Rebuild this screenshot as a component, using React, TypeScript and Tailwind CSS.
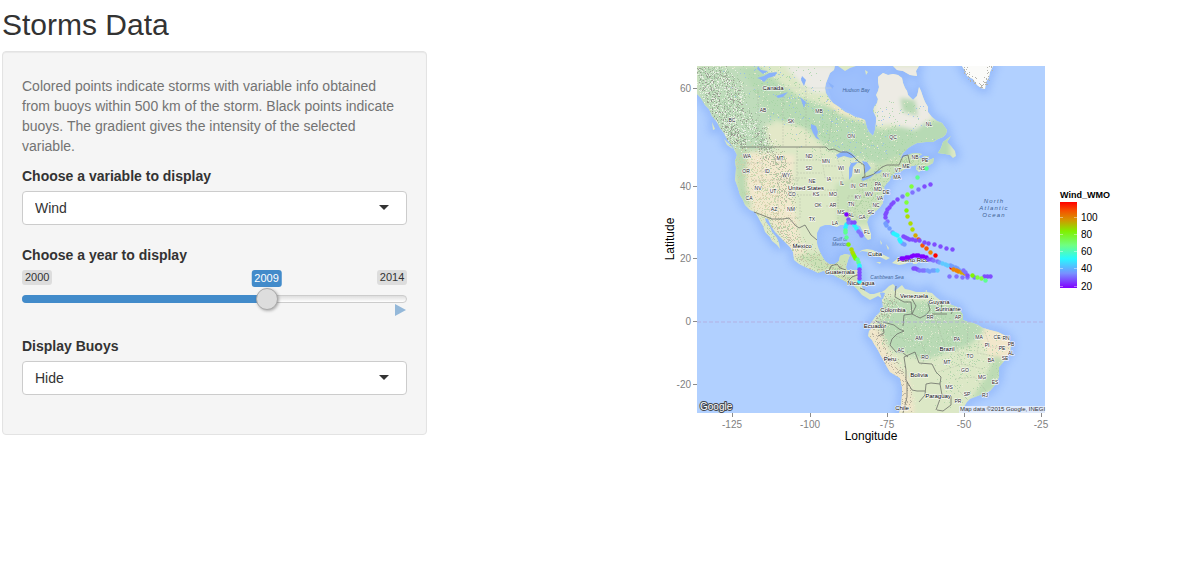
import { useState } from "react";
import type { ReactNode } from "react";

type Point = [number, number];
type Label = [number, number, string];

const NORTH_AMERICA =
  "M697 66V94L701 98 705 105 709 109 712 116 717 122 720 128 724 133 727 139 733 147 737 155 735 161 736 168 735 180 738 188 740 195 743 200 745 205 750 210 755 212 758 217 760 221 763 226 765 232 770 237 772 241 777 245 780 249 779 243 777 238 772 232 770 227 766 222 765 218 768 219 771 226 775 232 780 237 785 242 790 247 793 252 794 260 799 264 805 267 812 270 818 273 823 271 829 272 837 277 843 280 848 283 853 285 857 289 862 295 867 298 870 300 874 298 878 296 883 299 885 293 880 292 874 294 870 294 865 291 862 287 861 280 861 275 860 270 853 270 847 270 846 267 848 260 850 255 845 254 840 256 839 261 835 264 829 264 825 261 822 256 820 252 818 247 817 243 817 233 820 227 825 225 830 225 837 227 840 225 843 225 848 223 855 224 860 226 863 232 865 237 868 240 871 239 871 234 869 228 867 222 869 217 872 214 877 210 880 207 883 203 883 198 885 192 884 187 887 183 890 180 891 176 895 173 900 172 903 170 908 167 912 166 917 165 916 169 919 172 926 167 933 163 934 158 929 160 923 160 918 157 922 154 916 153 910 154 904 157 900 159 903 153 908 148 913 145 917 143 926 142 933 142 938 139 943 137 946 134 947 130 942 123 937 121 932 117 928 112 928 107 925 102 923 97 921 91 919 87 918 92 917 96 913 100 911 98 908 95 907 91 905 88 903 83 902 78 898 75 893 74 888 75 883 73 878 77 878 82 879 87 878 91 876 95 878 99 877 103 874 107 873 111 876 117 876 122 875 130 873 136 869 132 867 128 866 124 865 120 860 118 855 117 850 114 845 112 839 107 833 103 829 98 826 93 825 88 826 83 828 78 830 73 834 70 835 66Z";
const SOUTH_AMERICA =
  "M880 293L885 290 889 286 893 284 895 286 894 291 897 289 902 285 905 289 910 290 916 292 922 292 927 292 932 293 936 297 940 300 946 303 952 305 957 307 960 310 963 315 963 320 968 322 973 323 978 325 983 328 990 330 998 332 1004 335 1007 337 1011 343 1010 352 1005 360 999 367 999 377 997 381 995 385 990 391 985 393 980 395 975 397 970 399 967 402 964 407 962 413H899L901 407 902 395 902 387 900 378 895 375 890 372 887 367 885 363 881 356 878 350 874 344 872 340 868 336 869 331 872 328 870 324 873 320 875 317 880 312 883 307 882 300Z";
const ISLANDS =
  "M893 66L897 70 903 71 910 75 917 76 916 71 919 66ZM951 136L947 142 951 146 955 151 956 156 953 158 950 155 945 154 938 153 941 148 943 142ZM858 253L862 250 867 249 873 250 878 253 884 255 890 258 886 260 880 257 874 256 868 252 862 251ZM892 263L897 259 903 259 909 262 905 264 899 265ZM876 262L881 262 880 264ZM913 262L918 262 917 264 913 264ZM880 240L882 243 881 245ZM886 244L889 248 888 250ZM712 122L715 129 713 130ZM724 139L731 146 733 149 727 145ZM838 66L845 71 850 68 856 66ZM865 70L868 72 866 75ZM925 291L927 290 927 292ZM923 156L929 156 927 158Z";
const GREENLAND = "M962 66L965 71 967 76 973 79 977 85 981 88 985 89 986 82 989 77 990 72 993 66Z";

const LAND = `${NORTH_AMERICA}${SOUTH_AMERICA}${ISLANDS}${GREENLAND}`;

const LAKES =
  "M757 78L764 76 769 73 777 72 775 76 768 78 764 82 760 79ZM776 96L782 94 788 92 783 97 778 98ZM811 124L816 126 818 132 817 136 820 140 816 138 813 133 811 128ZM828 82L834 86 832 89ZM836 155L843 151 850 152 856 157 851 158 844 156 838 158ZM849 168L851 163 858 162 853 167 852 176 849 180ZM862 161L867 162 871 168 868 171 864 174 865 167ZM861 179L869 176 875 174 870 178 863 181ZM874 172L882 170 880 173 875 174ZM758 66L761 70 768 71 763 74 757 69ZM802 76L806 80 804 86 801 80ZM800 97L806 102 804 108Z";

const BORDERS =
  "M740 147H826L829 150 834 149 840 152 847 152 852 155 858 161 864 165 865 176 862 178 869 176 874 174 882 167 887 165 899 165 903 156 908 155 910 164M754 212L762 215 772 219 783 219 789 218 795 225 799 228 805 225 811 235 817 240M829 271L831 266 837 264 840 268 846 270M848 281L852 277 860 274M843 277L848 272M860 288L865 290M896 286L895 297 904 302 911 302 912 314 904 315 903 326M912 299L916 306 912 314 920 318 926 315 930 310 928 302 932 298M932 314L947 314M942 301L941 313M955 307L951 314M876 321L883 325 884 333 878 336M883 322L894 325 899 329 904 331 897 334 892 339 890 345 896 352 902 352 908 357M904 357L915 352 919 363 932 364 936 372 941 377 940 384 931 383 926 384 925 395 919 402M904 357L906 370 906 380 912 390 917 391 925 391M907 382L907 397 903 413M940 384L942 395 951 396 951 405 943 411 937 410M940 399L936 410";

const STATE_LINES =
  "M758 90V147M783 90V147M806 90V147M833 110L828 147M744 163H762M762 147V180M771 150L778 170M778 163H797M797 147V185M797 160H820M797 173H822M780 178H807M759 180L771 196M778 180V216M752 180H800M797 195H838M800 198V218H786M820 147L825 178M825 166H842M826 178H843M838 160L844 180M824 190H838M826 206H838M838 196V222M848 197V222M855 196V217M848 196H873M852 180V188L868 192M862 180V188M866 180H876M876 165V176M882 167V173M850 217H867M890 335L912 340M915 325L925 352M935 318L946 350M952 330L962 365M968 325L967 352M980 335L977 353 994 356M938 372L962 364 983 369M955 379L975 377 986 391M958 390L968 400M921 365L931 350M985 332L990 347 1010 347";

const MAP_LABELS: Label[] = [
  [732, 122, "BC"], [763, 112, "AB"], [791, 123, "SK"], [819, 113, "MB"], [851, 138, "ON"],
  [893, 139, "QC"], [929, 126, "NL"], [747, 158, "WA"], [780, 160, "MT"], [809, 158, "ND"],
  [826, 163, "MN"], [809, 170, "SD"], [746, 173, "OR"], [767, 173, "ID"], [786, 177, "WY"],
  [841, 170, "WI"], [857, 173, "MI"], [829, 181, "IA"], [812, 183, "NE"], [758, 190, "NV"],
  [773, 193, "UT"], [792, 196, "CO"], [816, 196, "KS"], [833, 196, "MO"], [842, 185, "IL"],
  [853, 188, "IN"], [863, 187, "OH"], [878, 186, "PA"], [886, 177, "NY"], [897, 179, "MA"],
  [898, 172, "VT"], [906, 168, "ME"], [915, 159, "NB"], [925, 162, "PE"], [922, 170, "NS"],
  [869, 196, "WV"], [878, 191, "MD"], [886, 194, "DE"], [880, 200, "VA"], [876, 207, "NC"],
  [871, 214, "SC"], [858, 199, "KY"], [851, 206, "TN"], [749, 200, "CA"], [774, 211, "AZ"],
  [791, 211, "NM"], [818, 207, "OK"], [833, 207, "AR"], [812, 221, "TX"], [835, 225, "LA"],
  [841, 214, "MS"], [851, 217, "AL"], [862, 219, "GA"], [867, 234, "FL"], [930, 319, "RR"],
  [958, 319, "AP"], [919, 340, "AM"], [957, 341, "PA"], [979, 339, "MA"], [997, 339, "CE"],
  [1006, 340, "RN"], [1011, 346, "PB"], [1002, 350, "PE"], [1011, 355, "AL"], [1005, 360, "SE"],
  [987, 347, "PI"], [901, 352, "AC"], [925, 359, "RO"], [947, 364, "MT"], [970, 358, "TO"],
  [991, 362, "BA"], [965, 372, "GO"], [982, 379, "MG"], [995, 384, "ES"], [949, 389, "MS"],
  [967, 396, "SP"], [985, 397, "RJ"], [958, 403, "PR"],
];

const COUNTRY_LABELS: Label[] = [
  [773, 90, "Canada"], [806, 190, "United States"], [802, 248, "Mexico"], [840, 274, "Guatemala"],
  [861, 285, "Nicaragua"], [875, 256, "Cuba"], [913, 262, "Puerto Rico"], [914, 298, "Venezuela"],
  [893, 312, "Colombia"], [939, 304, "Guyana"], [948, 311, "Suriname"], [875, 328, "Ecuador"],
  [890, 361, "Peru"], [947, 351, "Brazil"], [919, 377, "Bolivia"], [938, 398, "Paraguay"],
  [902, 410, "Chile"],
];

const SEA_LABELS: Label[] = [
  [856, 92, "Hudson Bay"], [840, 241, "Gulf of"], [840, 246, "Mexico"], [887, 279, "Caribbean Sea"],
];

const COLOR = {
  violet: "#7f00ff",
  purple: "#7f4dff",
  slate: "#8073ff",
  blue: "#739dff",
  sky: "#5fcaff",
  cyan: "#28f4ff",
  spring: "#5cff91",
  lime: "#80ff3c",
  green: "#80f500",
  olive: "#aedb00",
  gold: "#d5a900",
  orange: "#ef8500",
  vermilion: "#fa5600",
  red: "#ff0000",
};

const STORM_POINTS: { color: string; points: Point[] }[] = [
  { color: COLOR.purple, points: [[930, 184], [924, 186], [897, 199], [893, 202], [891, 204], [889, 207], [887, 209], [886, 212], [885, 214], [885, 217]] },
  { color: COLOR.slate, points: [[918, 189], [912, 192], [902, 196], [887, 221]] },
  { color: COLOR.blue, points: [[885, 223], [886, 225], [889, 228], [892, 232], [902, 243], [904, 244]] },
  { color: COLOR.cyan, points: [[893, 233], [895, 234], [897, 235], [899, 239], [900, 241]] },
  { color: COLOR.spring, points: [[926, 168], [917, 177]] },
  { color: COLOR.lime, points: [[911, 186], [907, 194], [906, 202]] },
  { color: COLOR.green, points: [[906, 210]] },
  { color: COLOR.olive, points: [[907, 216], [910, 223], [912, 229]] },
  { color: COLOR.gold, points: [[915, 235]] },
  { color: COLOR.vermilion, points: [[918, 239], [922, 245], [926, 248]] },
  { color: COLOR.orange, points: [[930, 252]] },
  { color: COLOR.red, points: [[935, 255], [951, 267]] },
  { color: COLOR.purple, points: [[903, 236], [905, 237], [907, 238], [909, 239], [912, 239], [915, 240], [919, 240], [924, 242], [928, 243], [934, 244], [940, 246], [946, 248], [952, 249]] },
  { color: COLOR.violet, points: [[901, 258], [903, 258], [906, 257], [908, 257], [911, 256], [913, 255], [916, 255], [918, 255], [921, 256], [923, 256], [926, 257]] },
  { color: COLOR.purple, points: [[928, 259], [931, 259]] },
  { color: COLOR.slate, points: [[933, 260], [937, 261]] },
  { color: COLOR.blue, points: [[939, 262], [950, 265], [952, 266], [955, 267], [957, 268], [959, 270]] },
  { color: COLOR.sky, points: [[942, 263], [945, 264], [947, 265]] },
  { color: COLOR.orange, points: [[953, 269], [956, 270], [958, 271]] },
  { color: COLOR.gold, points: [[961, 272], [964, 273]] },
  { color: COLOR.slate, points: [[963, 270], [965, 272], [949, 276], [956, 276], [962, 277], [967, 277], [974, 277]] },
  { color: COLOR.purple, points: [[967, 275], [984, 276], [987, 276], [990, 276]] },
  { color: COLOR.green, points: [[972, 275]] },
  { color: COLOR.lime, points: [[977, 277], [981, 278]] },
  { color: COLOR.spring, points: [[985, 280]] },
  { color: COLOR.purple, points: [[913, 268], [915, 268], [917, 269]] },
  { color: COLOR.slate, points: [[919, 270], [922, 270], [924, 270]] },
  { color: COLOR.blue, points: [[927, 270], [929, 271], [932, 270], [934, 270]] },
  { color: COLOR.sky, points: [[937, 270]] },
  { color: COLOR.violet, points: [[846, 214]] },
  { color: COLOR.cyan, points: [[846, 224], [845, 227], [854, 225], [856, 228]] },
  { color: COLOR.purple, points: [[848, 219], [851, 222], [854, 222]] },
  { color: COLOR.slate, points: [[848, 222], [858, 231], [860, 233], [861, 235]] },
  { color: COLOR.spring, points: [[845, 230], [845, 232], [846, 237]] },
  { color: COLOR.green, points: [[848, 244], [853, 254], [854, 256], [855, 258]] },
  { color: COLOR.olive, points: [[851, 249], [852, 252]] },
  { color: COLOR.spring, points: [[857, 259], [858, 262]] },
  { color: COLOR.cyan, points: [[859, 265], [859, 267], [859, 281]] },
  { color: COLOR.purple, points: [[859, 269], [859, 272], [859, 275], [859, 278]] },
];

function seeded(seed: number) {
  let state = seed;
  return () => {
    state = (state * 16807) % 2147483647;
    return state / 2147483647;
  };
}

// Scatters small unit squares around a polyline and returns them as one path.
function scatter(line: Point[], spread: number, count: number, seed: number) {
  const random = seeded(seed);
  let d = "";
  for (let i = 0; i < count; i++) {
    const t = random() * (line.length - 1);
    const k = Math.floor(t);
    const [x0, y0] = line[k];
    const [x1, y1] = line[k + 1];
    const x = Math.round(x0 + (x1 - x0) * (t - k) + (random() - 0.5) * 2 * spread);
    const y = Math.round(y0 + (y1 - y0) * (t - k) + (random() - 0.5) * 2 * spread);
    d += `M${x} ${y}h1v1h-1z`;
  }
  return d;
}

const ROCKIES: Point[] = [[702, 68], [712, 95], [727, 125], [740, 143]];
const EAST_ROCKIES: Point[] = [[712, 66], [733, 85], [735, 108], [757, 130], [768, 155]];
const WEST: Point[] = [[745, 150], [755, 180], [768, 205], [785, 225]];
const SIERRA: Point[] = [[773, 222], [789, 240], [805, 257], [830, 270], [848, 276]];
const COLORADO: Point[] = [[772, 150], [782, 175], [788, 200]];
const ANDES: Point[] = [[892, 296], [882, 315], [876, 332], [887, 358], [903, 375], [909, 412]];
const NORTH: Point[] = [[740, 72], [790, 95], [825, 125], [865, 140], [915, 125]];
const APPALACHIANS: Point[] = [[855, 213], [870, 195], [888, 175], [905, 160], [920, 153]];
const AMAZON: Point[] = [[900, 320], [935, 330], [980, 350], [960, 385]];

const TEXTURES = [
  { fill: "#a3d3a2", d: scatter(NORTH, 30, 700, 11) },
  { fill: "#f1eed6", d: scatter(NORTH, 28, 300, 23) },
  { fill: "#8db8f2", d: scatter(NORTH, 26, 170, 37) },
  { fill: "#9cbc9b", d: scatter(ROCKIES, 10, 380, 41) },
  { fill: "#8f8b85", d: scatter(ROCKIES, 8, 260, 47) },
  { fill: "#f7f6f0", d: scatter(ROCKIES, 10, 340, 43) },
  { fill: "#9cbc9b", d: scatter(EAST_ROCKIES, 10, 380, 53) },
  { fill: "#97928c", d: scatter(EAST_ROCKIES, 7, 180, 61) },
  { fill: "#f7f6f0", d: scatter(EAST_ROCKIES, 10, 280, 59) },
  { fill: "#b9d4a5", d: scatter(WEST, 17, 480, 67) },
  { fill: "#d9cda9", d: scatter(WEST, 17, 400, 71) },
  { fill: "#c2ba9f", d: scatter(SIERRA, 9, 300, 73) },
  { fill: "#a5cc9c", d: scatter(SIERRA, 11, 320, 79) },
  { fill: "#a4c59a", d: scatter(COLORADO, 10, 280, 83) },
  { fill: "#b4ad98", d: scatter(COLORADO, 8, 140, 89) },
  { fill: "#aba493", d: scatter(ANDES, 6, 300, 97) },
  { fill: "#f3ead0", d: scatter(ANDES, 8, 240, 101) },
  { fill: "#acd0a0", d: scatter(APPALACHIANS, 10, 380, 103) },
  { fill: "#a9d2a5", d: scatter(AMAZON, 30, 620, 107) },
  { fill: "#e9ecd6", d: scatter(AMAZON, 25, 260, 109) },
];

const GREENLAND_EDGE =
  scatter([[964, 68], [968, 75], [981, 86], [987, 80], [991, 66]], 3, 60, 127);

const Y_TICKS = [
  { y: 88, label: "60" },
  { y: 186, label: "40" },
  { y: 258, label: "20" },
  { y: 321, label: "0" },
  { y: 384, label: "-20" },
];
const X_TICKS = [
  { x: 732, label: "-125" },
  { x: 810, label: "-100" },
  { x: 887, label: "-75" },
  { x: 964, label: "-50" },
  { x: 1041, label: "-25" },
];
const LEGEND_TICKS = [
  { y: 217, label: "100" },
  { y: 234, label: "80" },
  { y: 251, label: "60" },
  { y: 268, label: "40" },
  { y: 286, label: "20" },
];

function BaseMap() {
  return (
    <g clipPath="url(#panel)">
      <rect x="697" y="66" width="348" height="347" fill="#b1d0ff" />
      <path d={LAND} fill="none" stroke="#6f9cf5" strokeWidth="8" opacity="0.45" filter="url(#shelf)" />
      <path d="M835 66L826 83 833 103 865 120 873 136 877 95 883 73 893 66Z" fill="#98bbfb" opacity="0.8" />
      <path d="M817 230H863L869 242 850 254 838 262 822 258Z" fill="#8fb5fb" opacity="0.4" filter="url(#shelf)" />
      <path d={LAND} fill="#dce8c6" />
      <g clipPath="url(#land)">
        <g filter="url(#biome)">
          <path d="M697 66H750L770 80 775 150 735 152 697 100Z" fill="#bfdcbb" />
          <path d="M758 66L800 98 832 108 866 122 880 130 950 118V165H880L830 150 805 128 770 118 740 66Z" fill="#b7dab4" />
          <path d="M765 124L800 126 822 148H770Z" fill="#e3e8c8" />
          <path d="M785 66H836L826 93 812 92 800 82Z" fill="#ecebe6" />
          <path d="M818 96L834 103 868 119 864 122 840 114Z" fill="#f3e9c9" />
          <path d="M876 66H925L932 118 915 130 890 124 875 125Z" fill="#edebe4" />
          <path d="M900 98L915 100 918 116 903 112Z" fill="#b8d9b4" />
          <path d="M745 152L795 155 792 195 800 240 810 262 795 258 770 220 750 208 742 180Z" fill="#f1e8cd" />
          <path d="M733 150H748L746 185 752 208 738 200Z" fill="#bcdab2" />
          <path d="M835 185L900 155 935 150 930 180 885 190 878 225 838 225Z" fill="#c8e0b8" />
          <path d="M794 255L850 252 862 295 880 300 840 285Z" fill="#cce0b5" />
          <path d="M885 298L960 305 985 330 970 345 925 360 892 350 876 330Z" fill="#b9dab5" />
          <path d="M985 326L1015 335 1012 358 992 360 982 345Z" fill="#f2e7cb" />
          <path d="M866 325L880 330 893 362 908 378 915 413H895L880 370Z" fill="#f0e5c9" />
          <path d="M995 355L1005 360 996 388 970 402 985 378Z" fill="#bddbb4" />
        </g>
        {TEXTURES.map((texture, i) => (
          <path key={i} d={texture.d} fill={texture.fill} opacity="0.75" />
        ))}
        <path d={STATE_LINES} fill="none" stroke="#9aa392" strokeWidth="0.5" opacity="0.6" strokeDasharray="2 1" />
      </g>
      <path d={GREENLAND} fill="#fbfbf9" />
      <path d={GREENLAND_EDGE} fill="#b5b4ad" />
      <path d={LAKES} fill="#8ab2fa" />
      <path d={BORDERS} fill="none" stroke="#6c6f68" strokeWidth="0.8" strokeLinejoin="round" />
      <path d="M697 322H1045" stroke="#b3a9dc" strokeWidth="0.8" strokeDasharray="4 2" />
      <path d="M697 88H832" stroke="#ccd6c8" strokeWidth="0.5" />
    </g>
  );
}

function MapText() {
  return (
    <g textAnchor="middle" fontFamily="'Liberation Sans', Arial, sans-serif" stroke="#ffffff" strokeWidth="1.2" paintOrder="stroke" strokeLinejoin="round">
      <g fontSize="5" fill="#222222">
        {MAP_LABELS.map(([x, y, text]) => (
          <text key={`${text}${x}`} x={x} y={y}>{text}</text>
        ))}
      </g>
      <g fontSize="6" fill="#000000">
        {COUNTRY_LABELS.map(([x, y, text]) => (
          <text key={text} x={x} y={y}>{text}</text>
        ))}
      </g>
      <g fontSize="5" fill="#45689b" fontStyle="italic" stroke="none">
        {SEA_LABELS.map(([x, y, text]) => (
          <text key={text} x={x} y={y}>{text}</text>
        ))}
      </g>
      <g fontSize="6" fill="#3d5f92" fontStyle="italic" stroke="none" className="tracking-[0.2em]">
        <text x="994" y="203">North</text>
        <text x="994" y="210">Atlantic</text>
        <text x="994" y="217">Ocean</text>
      </g>
    </g>
  );
}

function StormMap() {
  return (
    <svg viewBox="587 51 600 400" className="block w-full max-w-[600px]" role="img" aria-label="Storm tracks by wind speed">
      <defs>
        <clipPath id="panel"><rect x="697" y="66" width="348" height="347" /></clipPath>
        <clipPath id="land"><path d={LAND} /></clipPath>
        <filter id="shelf" x="-10%" y="-10%" width="120%" height="120%"><feGaussianBlur stdDeviation="4" /></filter>
        <filter id="biome" x="-10%" y="-10%" width="120%" height="120%"><feGaussianBlur stdDeviation="2" /></filter>
        <linearGradient id="wind" x1="0" y1="0" x2="0" y2="1">
          <stop offset="0" stopColor="#ff0000" />
          <stop offset="0.1" stopColor="#f55000" />
          <stop offset="0.2" stopColor="#d99000" />
          <stop offset="0.34" stopColor="#80f000" />
          <stop offset="0.5" stopColor="#70ff80" />
          <stop offset="0.66" stopColor="#28f8ff" />
          <stop offset="0.83" stopColor="#7890ff" />
          <stop offset="1" stopColor="#8000ff" />
        </linearGradient>
      </defs>

      <BaseMap />
      <MapText />

      {STORM_POINTS.map((group, i) => (
        <g key={i} fill={group.color}>
          {group.points.map(([x, y]) => (
            <circle key={`${x},${y}`} cx={x + 0.5} cy={y + 0.5} r="2.2" />
          ))}
        </g>
      ))}

      <g fontFamily="'Liberation Sans', Arial, sans-serif">
        <text x="700" y="410" fontSize="10" fill="#ffffff" stroke="#43474e" strokeWidth="2" paintOrder="stroke" strokeLinejoin="round">Google</text>
        <rect x="959" y="406" width="86" height="7" fill="#e8effb" opacity="0.85" />
        <text x="960" y="411" fontSize="6" fill="#333333">Map data ©2015 Google, INEGI</text>

        <g stroke="#8c8c8c" strokeWidth="1">
          {Y_TICKS.map(({ y }) => <path key={y} d={`M693 ${y + 0.5}H697`} />)}
          {X_TICKS.map(({ x }) => <path key={x} d={`M${x + 0.5} 413V417`} />)}
        </g>
        <g fontSize="10" fill="#7f7f7f">
          {Y_TICKS.map(({ y, label }) => (
            <text key={y} x="691" y={y + 4} textAnchor="end">{label}</text>
          ))}
          {X_TICKS.map(({ x, label }) => (
            <text key={x} x={x} y="428" textAnchor="middle">{label}</text>
          ))}
        </g>
        <text x="871" y="440" fontSize="12" textAnchor="middle">Longitude</text>
        <text transform="translate(674 239) rotate(-90)" fontSize="12" textAnchor="middle">Latitude</text>

        <text x="1060" y="198" fontSize="9" fontWeight="700">Wind_WMO</text>
        <rect x="1060" y="202" width="17" height="86" fill="url(#wind)" />
        {LEGEND_TICKS.map(({ y, label }) => (
          <g key={y}>
            <path d={`M1060 ${y + 0.5}h3M1074 ${y + 0.5}h3`} stroke="#ffffff" strokeWidth="0.6" opacity="0.7" />
            <text x="1081" y={y + 4} fontSize="10">{label}</text>
          </g>
        ))}
      </g>
    </svg>
  );
}

function SelectField({ id, label, options }: { id: string; label: string; options: string[] }) {
  return (
    <div>
      <label htmlFor={id} className="mb-[5px] block font-bold">{label}</label>
      <div className="relative">
        <select
          id={id}
          className="block h-[34px] w-full appearance-none rounded-[4px] border border-[#cccccc] bg-white pr-10 pl-3 text-sm text-[#333333]"
        >
          {options.map((option) => <option key={option}>{option}</option>)}
        </select>
        <svg viewBox="0 0 10 5" className="pointer-events-none absolute top-3.5 right-[18px] h-[5px] w-2.5" aria-hidden="true">
          <path d="M0 0H10L5 5Z" fill="#333333" />
        </svg>
      </div>
    </div>
  );
}

function Tag({ children }: { children: ReactNode }) {
  return (
    <span className="h-[15px] rounded-[3px] bg-[#dddddd] px-[3px] text-[11px] leading-[15px] text-[#333333]">
      {children}
    </span>
  );
}

function YearSlider() {
  const min = 2000;
  const max = 2014;
  const [year, setYear] = useState(2009);
  const share = (year - min) / (max - min);
  const center = `calc(11px + (100% - 22px) * ${share})`;

  return (
    <div>
      <label htmlFor="year" className="mb-[5px] block font-bold">Choose a year to display</label>
      <div className="relative">
        <div className="flex justify-between">
          <Tag>{min}</Tag>
          <Tag>{max}</Tag>
        </div>
        <output
          htmlFor="year"
          style={{ left: center }}
          className="absolute top-0 h-[17px] -translate-x-1/2 rounded-[3px] bg-[#428bca] px-[3px] text-[11px] leading-[17px] text-white"
        >
          {year}
        </output>
        <div className="relative mt-[3px] flex h-[22px] items-center">
          <div className="h-2 w-full overflow-hidden rounded-full border border-[#cccccc] bg-linear-to-b from-[#dedede] to-white" />
          <div style={{ width: center }} className="absolute left-0 h-2 rounded-l-full bg-[#428bca]" />
          <input
            id="year"
            type="range"
            min={min}
            max={max}
            value={year}
            onChange={(event) => setYear(Number(event.target.value))}
            className="absolute inset-0 m-0 h-[22px] w-full appearance-none bg-transparent [&::-webkit-slider-thumb]:size-[22px] [&::-webkit-slider-thumb]:appearance-none [&::-webkit-slider-thumb]:rounded-full [&::-webkit-slider-thumb]:border [&::-webkit-slider-thumb]:border-[#aaaaaa] [&::-webkit-slider-thumb]:bg-[#dddddd] [&::-webkit-slider-thumb]:shadow-[1px_1px_3px_rgba(0,0,0,0.3)]"
          />
        </div>
        <div className="-mt-1.5 flex justify-end">
          <button type="button" aria-label="Play" className="relative block pr-px">
            <svg viewBox="0 0 11 12" className="h-3 w-[11px]" aria-hidden="true">
              <path d="M0 0L11 6L0 12Z" fill="#94b8d9" />
            </svg>
          </button>
        </div>
      </div>
    </div>
  );
}

export default function App() {
  return (
    <main className="min-h-screen bg-white pt-2 font-['Liberation_Sans',Arial,sans-serif] text-sm leading-5 text-[#333333]">
      <h1 className="mb-2.5 pl-0.5 text-[30px] leading-[33px] font-medium">Storms Data</h1>
      <div className="grid grid-cols-[9fr_16fr] items-start">
        <div className="pl-0.5">
          <form className="flex flex-col gap-5 rounded-[4px] border border-[#e3e3e3] bg-[#f5f5f5] px-[19px] pt-6 pb-[39px] shadow-[inset_0_1px_1px_rgba(0,0,0,0.05)]">
            <div className="flex flex-col gap-2.5">
              <p className="text-[#737373]">
                Colored points indicate storms with variable info obtained from buoys within 500 km of the storm.
                Black points indicate buoys. The gradient gives the intensity of the selected variable.
              </p>
              <SelectField id="variable" label="Choose a variable to display" options={["Wind", "Pressure"]} />
            </div>
            <YearSlider />
            <SelectField id="buoys" label="Display Buoys" options={["Hide", "Show"]} />
          </form>
        </div>
        <div className="flex justify-end">
          <StormMap />
        </div>
      </div>
    </main>
  );
}
